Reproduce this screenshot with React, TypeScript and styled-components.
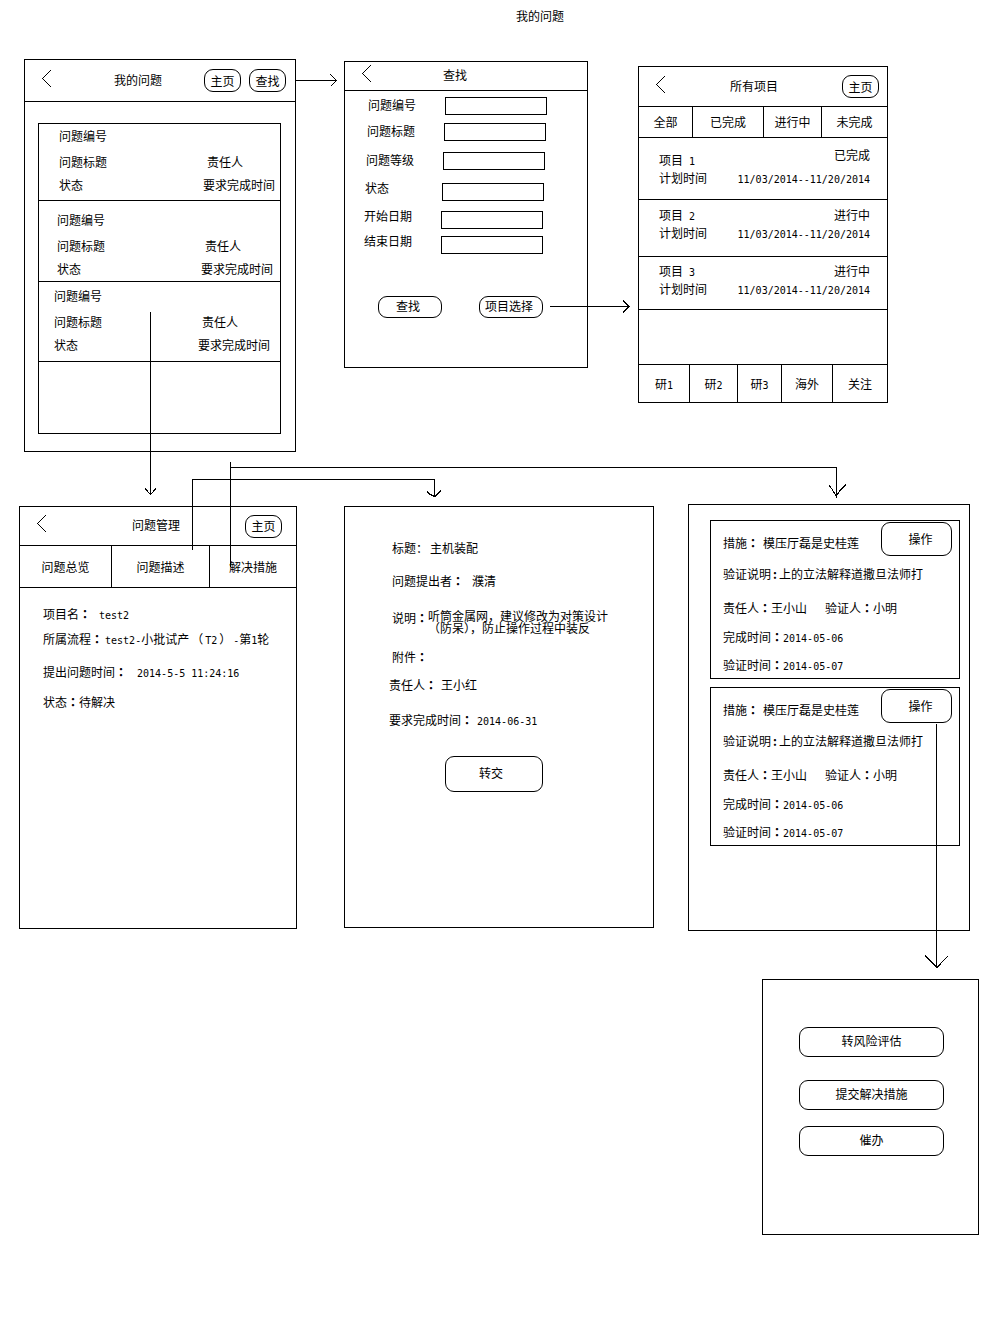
import React from 'react';
import styled, { createGlobalStyle } from 'styled-components';

const INK = '#000';

const GlobalStyle = createGlobalStyle`
  *, *::before, *::after { box-sizing: border-box; }
  body {
    margin: 0;
    background: #fff;
    color: ${INK};
    font-family: "Noto Sans CJK SC", sans-serif;
    font-size: 12px;
    line-height: 18px;
  }
  button, input {
    font: inherit;
    color: inherit;
    background: transparent;
    border-radius: 0;
    margin: 0;
    padding: 0;
  }
  h1, h2, p, dl, dd, ul { margin: 0; padding: 0; font: inherit; }
  ul { list-style: none; }
`;

/* ---------- canvas ---------- */

const Canvas = styled.main`
  position: relative;
  min-height: 1325px;
`;

const BoardTitle = styled.h1`
  padding: 7px 0 0 516px;
`;

const Screen = styled.section<{ $x: number; $y: number; $w: number; $h: number }>`
  position: absolute;
  left: ${p => p.$x}px;
  top: ${p => p.$y}px;
  width: ${p => p.$w}px;
  min-height: ${p => p.$h}px;
  display: flex;
  flex-direction: column;
  border: 1px solid ${INK};
`;

const Connectors = styled.svg`
  position: absolute;
  left: 0;
  top: 0;
  pointer-events: none;
  fill: none;
  stroke: ${INK};
  shape-rendering: crispEdges;
`;

/* ---------- shared parts ---------- */

const Mono = styled.span`
  font-family: "DejaVu Sans Mono", monospace;
  font-size: 10px;
  line-height: 10px;
  white-space: pre;
`;

const Centered = styled.span`
  font-family: "Noto Sans CJK TC", "Noto Sans CJK SC", sans-serif;
  font-weight: 700;
  line-height: 12px;
`;

const Colon = () => <Centered lang="zh-TW">：</Centered>;

const Bar = styled.header<{ $h: number; $end: number }>`
  display: flex;
  align-items: center;
  gap: 8px;
  height: ${p => p.$h}px;
  padding: 0 ${p => p.$end}px 0 15px;
  border-bottom: 1px solid ${INK};
`;

const BackButton = styled.button`
  display: flex;
  border: 0;
  padding-bottom: 5px;
`;

const BarTitle = styled.h2<{ $gap: number }>`
  flex: 1;
  padding: 0 0 2px ${p => p.$gap}px;
  white-space: nowrap;
`;

const Pill = styled.button<{ $w: number; $h: number; $above?: number }>`
  flex: none;
  width: ${p => p.$w}px;
  height: ${p => p.$h}px;
  margin-top: ${p => p.$above ?? 0}px;
  border: 1px solid ${INK};
  border-radius: 9px;
  line-height: 18px;
  white-space: nowrap;
`;

const TopBar = ({ title, gap, height, end = 8, actions = [] }: {
  title: string; gap: number; height: number; end?: number; actions?: string[];
}) => (
  <Bar $h={height} $end={end}>
    <BackButton type="button" aria-label="返回">
      <svg width="12" height="19" viewBox="0 0 12 19" fill="none" stroke={INK} shapeRendering="crispEdges">
        <path d="M11 1 L2.5 9.5 L11 18" />
      </svg>
    </BackButton>
    <BarTitle $gap={gap}>{title}</BarTitle>
    {actions.map(a => <Pill key={a} type="button" $w={37} $h={23}>{a}</Pill>)}
  </Bar>
);

const TabRow = styled.nav<{ $h: number; $columns: string; $atEnd?: boolean }>`
  display: grid;
  grid-template-columns: ${p => p.$columns};
  height: ${p => p.$h}px;
  margin-top: ${p => (p.$atEnd ? 'auto' : '0')};
  border: 0 solid ${INK};
  border-width: ${p => (p.$atEnd ? '1px 0 0' : '0 0 1px')};
`;

const Tab = styled.button`
  border: 0 solid ${INK};
  border-right-width: 1px;
  white-space: nowrap;
  &:last-child { border-right-width: 0; }
`;

/* ---------- my issues ---------- */

const IssueList = styled.ul`
  height: 311px;
  margin: 21px 14px 17px 13px;
  border: 1px solid ${INK};
`;

const Issue = styled.li<{ $h: number; $top: number; $left: number }>`
  display: grid;
  grid-template-columns: 144px 1fr;
  grid-template-rows: 24px 28px 18px;
  align-items: center;
  height: ${p => p.$h}px;
  padding: ${p => p.$top}px 0 0 ${p => p.$left}px;
  border-bottom: 1px solid ${INK};
  white-space: nowrap;
`;

const IssueNumber = styled.span`
  grid-column: 1 / -1;
`;

const Owner = styled.span`
  padding-left: 4px;
`;

const issues = [
  { h: 77, top: 0, left: 20 },
  { h: 81, top: 7, left: 18 },
  { h: 80, top: 2, left: 15 },
];

const MyIssues = () => (
  <Screen $x={24} $y={59} $w={272} $h={393}>
    <TopBar title="我的问题" gap={54} height={42} end={9} actions={['主页', '查找']} />
    <IssueList>
      {issues.map((it, i) => (
        <Issue key={i} $h={it.h} $top={it.top} $left={it.left}>
          <IssueNumber>问题编号</IssueNumber>
          <span>问题标题</span>
          <Owner>责任人</Owner>
          <span>状态</span>
          <span>要求完成时间</span>
        </Issue>
      ))}
    </IssueList>
  </Screen>
);

/* ---------- search ---------- */

const SearchForm = styled.form`
  padding-top: 6px;
`;

const Field = styled.label<{ $left: number; $gap: number; $raised?: boolean }>`
  display: flex;
  align-items: flex-start;
  margin-bottom: ${p => p.$gap}px;
  padding-left: ${p => p.$left}px;
  line-height: ${p => (p.$raised ? 10 : 16)}px;
`;

const FieldName = styled.span`
  width: 77px;
`;

const FieldInput = styled.input`
  width: 102px;
  height: 18px;
  border: 1px solid ${INK};
`;

const FormActions = styled.div`
  display: flex;
  gap: 37px;
  padding: 34px 0 0 33px;
`;

const FormButton = styled(Pill)`
  padding: 0 4px 2px 0;
`;

const fields = [
  { name: '问题编号', left: 23, gap: 8 },
  { name: '问题标题', left: 22, gap: 11 },
  { name: '问题等级', left: 21, gap: 13 },
  { name: '状态', left: 20, gap: 10, raised: true },
  { name: '开始日期', left: 19, gap: 7, raised: true },
  { name: '结束日期', left: 19, gap: 8, raised: true },
];

const Search = () => (
  <Screen $x={344} $y={61} $w={244} $h={307}>
    <TopBar title="查找" gap={63} height={29} />
    <SearchForm onSubmit={e => e.preventDefault()}>
      {fields.map(f => (
        <Field key={f.name} $left={f.left} $gap={f.gap} $raised={f.raised}>
          <FieldName>{f.name}</FieldName>
          <FieldInput type="text" />
        </Field>
      ))}
      <FormActions>
        <FormButton type="submit" $w={64} $h={22}>查找</FormButton>
        <FormButton type="button" $w={64} $h={22}>项目选择</FormButton>
      </FormActions>
    </SearchForm>
  </Screen>
);

/* ---------- all projects ---------- */

const Project = styled.li<{ $h: number }>`
  display: flex;
  justify-content: space-between;
  height: ${p => p.$h}px;
  padding: 0 17px 0 20px;
  border-bottom: 1px solid ${INK};
  white-space: nowrap;
`;

const ProjectColumn = styled.div<{ $top: number; $gap?: number; $end?: boolean }>`
  display: flex;
  flex-direction: column;
  align-items: ${p => (p.$end ? 'flex-end' : 'flex-start')};
  gap: ${p => p.$gap ?? 0}px;
  padding-top: ${p => p.$top}px;
`;

const projects = [
  { no: 1, status: '已完成', h: 62, top: 13, statusTop: 8, statusGap: 5 },
  { no: 2, status: '进行中', h: 57, top: 6, statusTop: 6, statusGap: 0 },
  { no: 3, status: '进行中', h: 53, top: 5, statusTop: 5, statusGap: 0 },
];

const AllProjects = () => (
  <Screen $x={638} $y={66} $w={250} $h={337}>
    <TopBar title="所有项目" gap={56} height={40} actions={['主页']} />
    <TabRow $h={31} $columns="54fr 71fr 58fr 65fr">
      <Tab type="button">全部</Tab>
      <Tab type="button">已完成</Tab>
      <Tab type="button">进行中</Tab>
      <Tab type="button">未完成</Tab>
    </TabRow>
    <ul>
      {projects.map(p => (
        <Project key={p.no} $h={p.h}>
          <ProjectColumn $top={p.top}>
            <span>项目<Mono>{` ${p.no}`}</Mono></span>
            <span>计划时间</span>
          </ProjectColumn>
          <ProjectColumn $top={p.statusTop} $gap={p.statusGap} $end>
            <span>{p.status}</span>
            <span><Mono>11/03/2014--11/20/2014</Mono></span>
          </ProjectColumn>
        </Project>
      ))}
    </ul>
    <TabRow $h={38} $columns="51fr 48fr 44fr 51fr 54fr" $atEnd>
      <Tab type="button">研<Mono>1</Mono></Tab>
      <Tab type="button">研<Mono>2</Mono></Tab>
      <Tab type="button">研<Mono>3</Mono></Tab>
      <Tab type="button">海外</Tab>
      <Tab type="button">关注</Tab>
    </TabRow>
  </Screen>
);

/* ---------- detail lines ---------- */

const Details = styled.dl<{ $top: number; $left: number }>`
  padding: ${p => p.$top}px 0 0 ${p => p.$left}px;
`;

const Line = styled.div<{ $above?: number; $gap?: number }>`
  display: flex;
  align-items: flex-start;
  gap: ${p => p.$gap ?? 0}px;
  margin-top: ${p => p.$above ?? 0}px;
  white-space: nowrap;
`;

const Paren = styled.span`
  padding: 0 2px;
`;

const IssueManagement = () => (
  <Screen $x={19} $y={506} $w={278} $h={423}>
    <TopBar title="问题管理" gap={77} height={39} end={14} actions={['主页']} />
    <TabRow $h={42} $columns="92fr 98fr 86fr">
      <Tab type="button">问题总览</Tab>
      <Tab type="button">问题描述</Tab>
      <Tab type="button">解决措施</Tab>
    </TabRow>
    <Details $top={17} $left={23}>
      <Line $gap={8}>
        <dt>项目名<Colon /></dt>
        <dd><Mono>test2</Mono></dd>
      </Line>
      <Line $above={7} $gap={2}>
        <dt>所属流程<Colon /></dt>
        <dd>
          <Mono>test2-</Mono>小批试产<Paren>（</Paren><Mono>T2</Mono><Paren>）</Paren><Mono>-</Mono>第<Mono>1</Mono>轮
        </dd>
      </Line>
      <Line $above={15} $gap={10}>
        <dt>提出问题时间<Colon /></dt>
        <dd><Mono>2014-5-5 11:24:16</Mono></dd>
      </Line>
      <Line $above={12}>
        <dt>状态<Colon /></dt>
        <dd>待解决</dd>
      </Line>
    </Details>
  </Screen>
);

/* ---------- issue description ---------- */

const Paragraph = styled.dd`
  width: 182px;
  padding-top: 1px;
  line-height: 12px;
  white-space: normal;
`;

const HandOver = styled(Pill)`
  margin-left: 100px;
  padding: 0 6px 2px 0;
`;

const IssueDescription = () => (
  <Screen $x={344} $y={506} $w={310} $h={422}>
    <Details $top={32} $left={47}>
      <Line $gap={2}>
        <dt>标题：</dt>
        <dd>主机装配</dd>
      </Line>
      <Line $above={15} $gap={8}>
        <dt>问题提出者<Colon /></dt>
        <dd>濮清</dd>
      </Line>
      <Line $above={19}>
        <dt>说明<Colon /></dt>
        <Paragraph>听筒金属网，建议修改为对策设计（防呆），防止操作过程中装反</Paragraph>
      </Line>
      <Line $above={14}>
        <dt>附件<Colon /></dt>
        <dd />
      </Line>
    </Details>
    <Details $top={10} $left={44}>
      <Line $gap={4}>
        <dt>责任人<Colon /></dt>
        <dd>王小红</dd>
      </Line>
      <Line $above={17} $gap={4}>
        <dt>要求完成时间<Colon /></dt>
        <dd><Mono>2014-06-31</Mono></dd>
      </Line>
    </Details>
    <HandOver type="button" $w={98} $h={36} $above={27}>转交</HandOver>
  </Screen>
);

/* ---------- measures ---------- */

const MeasureStack = styled.div`
  display: flex;
  flex-direction: column;
  gap: 8px;
  padding: 15px 9px 0 21px;
`;

const MeasureCard = styled.article`
  height: 159px;
  padding: 0 7px 0 12px;
  border: 1px solid ${INK};
`;

const MeasureHead = styled.div`
  display: flex;
  align-items: flex-start;
  justify-content: space-between;
  height: 44px;
  padding-top: 1px;
`;

const OperateButton = styled(Pill)`
  padding-left: 8px;
`;

const HeadLine = styled(Line)`
  padding-top: 12px;
`;

const SplitLine = styled(Line)`
  gap: 18px;
`;

const Pair = styled.div`
  display: flex;
`;

const NarrowColon = styled.span`
  display: inline-block;
  width: 8px;
  text-align: center;
  font-weight: 700;
`;

const Measure = () => (
  <MeasureCard>
    <MeasureHead>
      <HeadLine as="p" $gap={4}>
        <span>措施<Colon /></span>
        <span>模压厅磊是史桂莲</span>
      </HeadLine>
      <OperateButton type="button" $w={71} $h={34}>操作</OperateButton>
    </MeasureHead>
    <dl>
      <Line>
        <dt>验证说明<NarrowColon>:</NarrowColon></dt>
        <dd>上的立法解释道撒旦法师打</dd>
      </Line>
      <SplitLine $above={16}>
        <Pair><dt>责任人<Colon /></dt><dd>王小山</dd></Pair>
        <Pair><dt>验证人<Colon /></dt><dd>小明</dd></Pair>
      </SplitLine>
      <Line $above={11}>
        <dt>完成时间<Colon /></dt>
        <dd><Mono>2014-05-06</Mono></dd>
      </Line>
      <Line $above={10}>
        <dt>验证时间<Colon /></dt>
        <dd><Mono>2014-05-07</Mono></dd>
      </Line>
    </dl>
  </MeasureCard>
);

const Measures = () => (
  <Screen $x={688} $y={504} $w={282} $h={427}>
    <MeasureStack>
      <Measure />
      <Measure />
    </MeasureStack>
  </Screen>
);

/* ---------- operations ---------- */

const OperationStack = styled.div`
  display: flex;
  flex-direction: column;
  padding: 47px 0 0 36px;
`;

const OperationButton = styled(Pill)`
  padding-bottom: 2px;
`;

const Operations = () => (
  <Screen $x={762} $y={979} $w={217} $h={256}>
    <OperationStack>
      <OperationButton type="button" $w={145} $h={30}>转风险评估</OperationButton>
      <OperationButton type="button" $w={145} $h={30} $above={23}>提交解决措施</OperationButton>
      <OperationButton type="button" $w={145} $h={30} $above={16}>催办</OperationButton>
    </OperationStack>
  </Screen>
);

export default function App() {
  return (
    <>
      <GlobalStyle />
      <Canvas lang="zh-CN">
        <BoardTitle>我的问题</BoardTitle>
        <MyIssues />
        <Search />
        <AllProjects />
        <IssueManagement />
        <IssueDescription />
        <Measures />
        <Operations />
        <Connectors width="1001" height="1325" viewBox="0 0 1001 1325" aria-hidden="true">
          <path d="M296 80.5 H337 M330.5 74.5 L336.5 80.5 L330.5 86.5" />
          <path d="M550 306.5 H629 M623 300.5 L629 306.5 L623 312.5" />
          <path d="M150.5 312 V494 M145 488.5 L150.5 494.5 L156 488.5" />
          <path d="M192.5 550 V479.5 H434.5 V497" />
          <path strokeWidth="1.5" d="M427 491.5 C429 494 431 495.5 434.5 496.5 C437 494.5 438.5 493 441 491" />
          <path d="M230.5 462 V567 M230.5 467.5 H836.5 V496" />
          <path d="M829 485 C832 489 834 492 836.5 496.5 C838 492 841 489 846 484.5" />
          <path d="M936.5 724 V967 M925 955.5 L937 967.5 L948 956" />
        </Connectors>
      </Canvas>
    </>
  );
}
